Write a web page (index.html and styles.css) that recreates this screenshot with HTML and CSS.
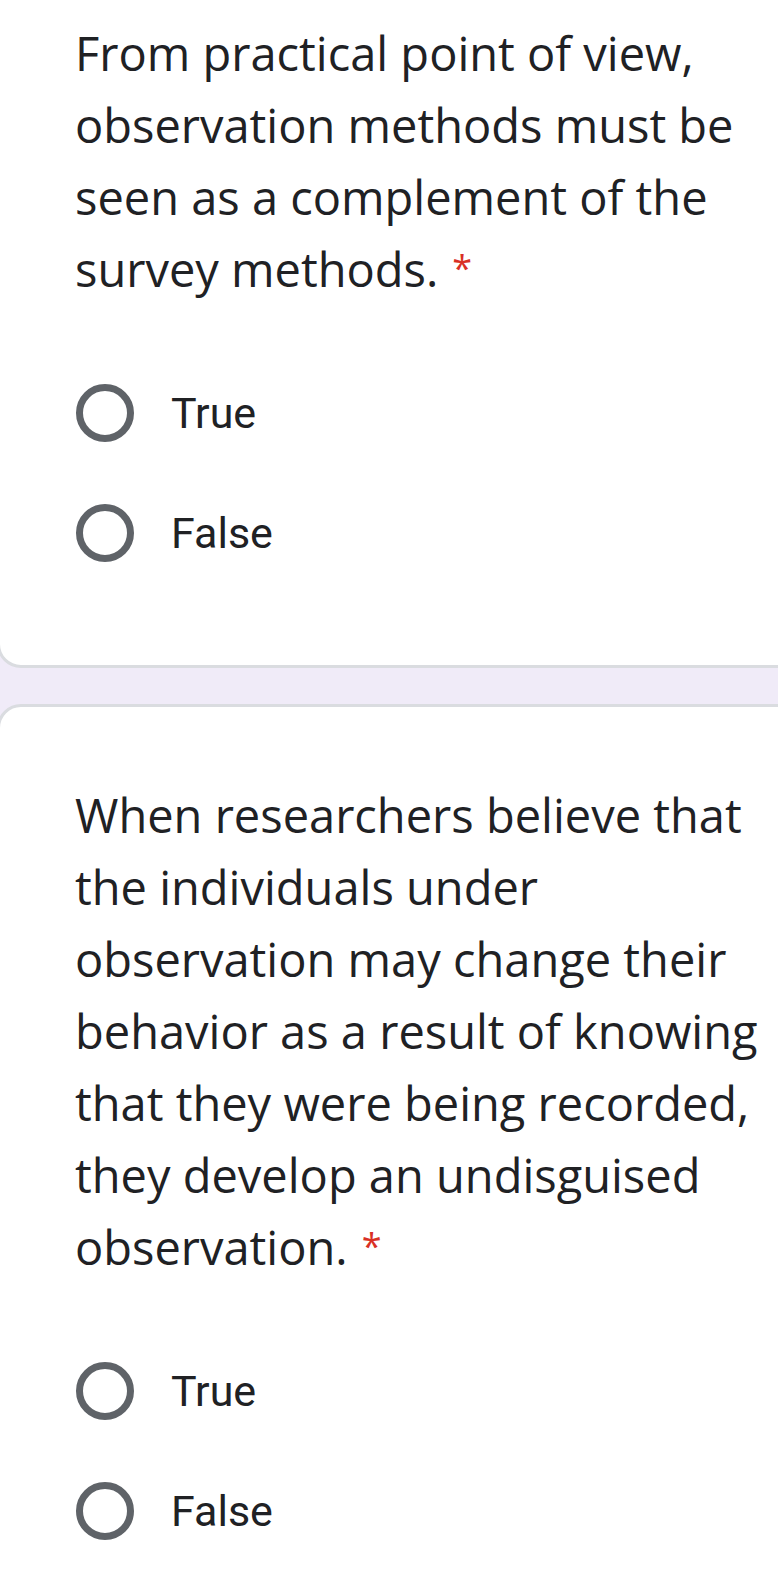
FILE: index.html
```html
<!DOCTYPE html>
<html lang="en">
<head>
  <meta charset="UTF-8">
  <meta name="viewport" content="width=device-width, initial-scale=1.0">
  <title>Quiz</title>
  <link rel="stylesheet" href="styles.css">
</head>
<body>
  <div class="form">
    <div class="card">
      <div class="question">
        From practical point of view, observation methods must be seen as a complement of the survey methods.<span class="required">*</span>
      </div>
      <div class="options" role="radiogroup">
        <div class="option" role="radio" aria-checked="false">
          <span class="radio"></span>
          <span class="label">True</span>
        </div>
        <div class="option" role="radio" aria-checked="false">
          <span class="radio"></span>
          <span class="label">False</span>
        </div>
      </div>
    </div>

    <div class="card">
      <div class="question">
        When researchers believe that the individuals under observation may change their behavior as a result of knowing that they were being recorded, they develop an undisguised observation.<span class="required">*</span>
      </div>
      <div class="options" role="radiogroup">
        <div class="option" role="radio" aria-checked="false">
          <span class="radio"></span>
          <span class="label">True</span>
        </div>
        <div class="option" role="radio" aria-checked="false">
          <span class="radio"></span>
          <span class="label">False</span>
        </div>
      </div>
    </div>
  </div>
</body>
</html>
```

FILE: styles.css
```css
* {
  box-sizing: border-box;
}

body {
  margin: 0;
  background: #f0ebf8;
  color: #202124;
  overflow: hidden;
}

/* scrolled view: first card starts above the fold */
.form {
  margin-top: -58px;
  display: flex;
  flex-direction: column;
  gap: 36px;
}

.card {
  background: #ffffff;
  border: 3px solid #dadce0;
  border-radius: 24px;
  margin: 0 -77px 0 -3px;
  padding: 72px 72px 96px 75px;
}

.question {
  font-family: 'Open Sans', sans-serif;
  font-size: 47px;
  line-height: 72px;
  font-weight: 400;
  color: #202124;
}

.required {
  color: #d93025;
  padding-left: 14px;
  font-size: 36px;
  line-height: 1;
  vertical-align: 6px;
}

/* radio list */
.options {
  margin-top: 72px;
  display: flex;
  flex-direction: column;
  gap: 48px;
}

.option {
  display: flex;
  align-items: center;
  gap: 37px;
  min-height: 72px;
  cursor: pointer;
}

.radio {
  width: 58px;
  height: 58px;
  border: 7px solid #5f6368;
  border-radius: 50%;
  margin-left: 1px;
  flex-shrink: 0;
}

.label {
  font-family: Roboto, sans-serif;
  font-size: 43px;
  color: #202124;
}
```
